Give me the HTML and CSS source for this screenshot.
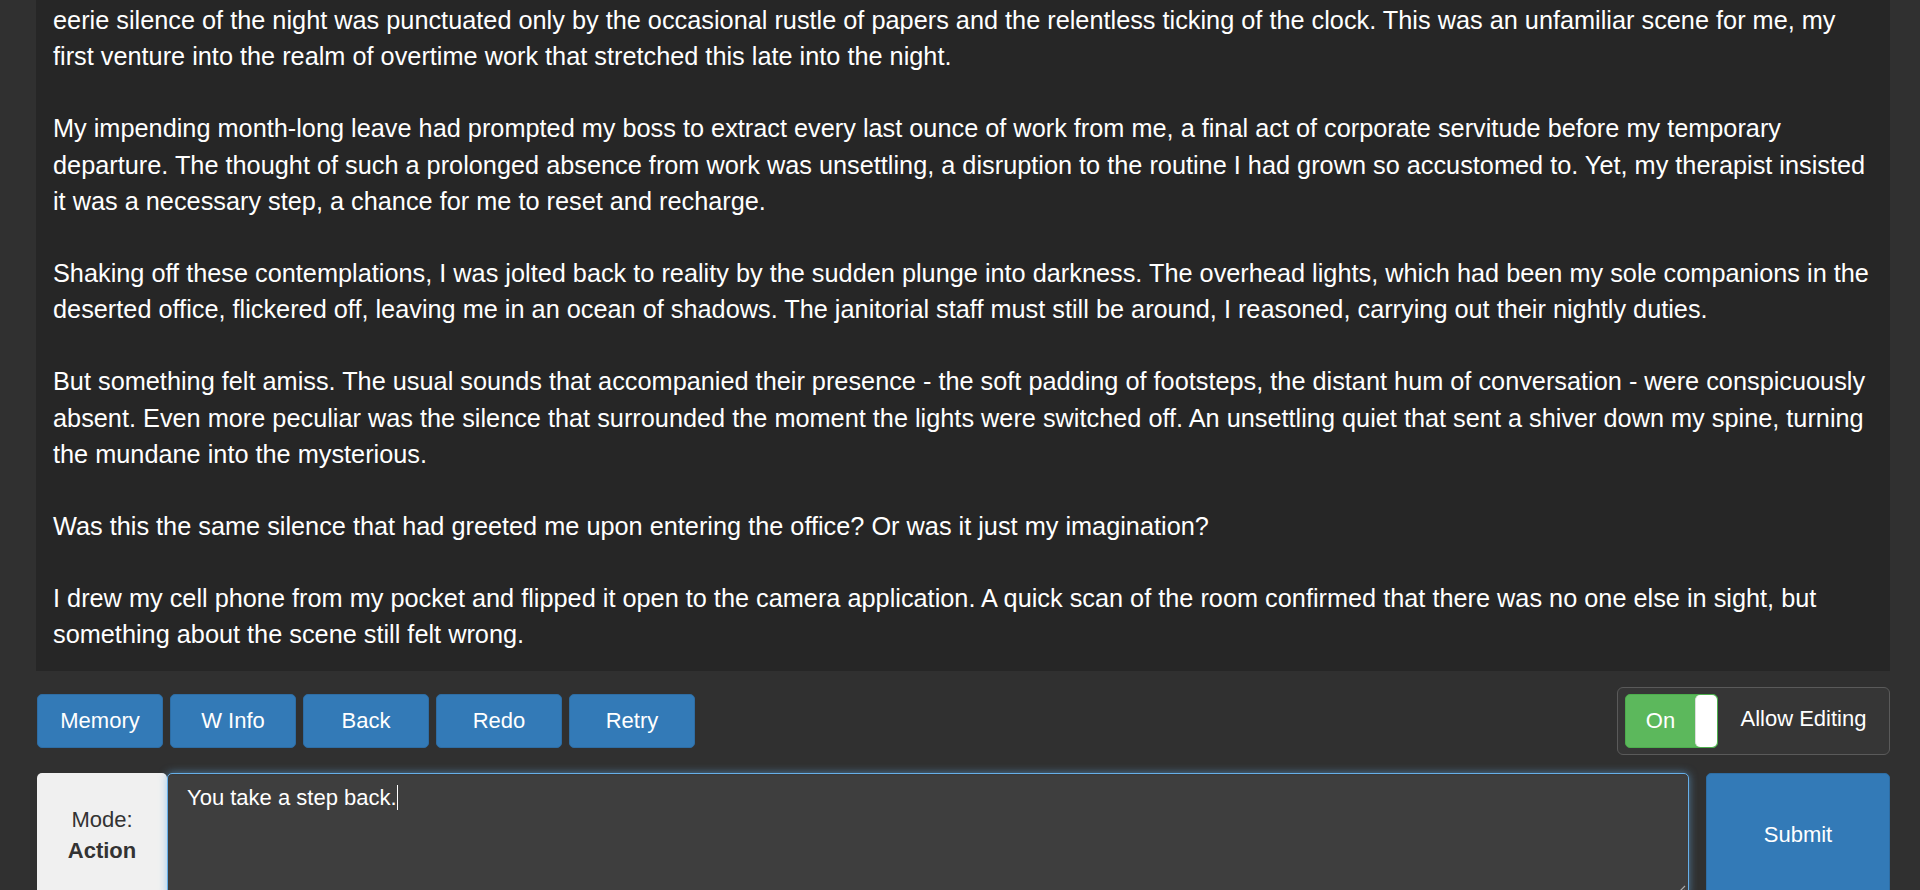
FILE: index.html
```html
<!DOCTYPE html>
<html lang="en">
<head>
<meta charset="utf-8">
<title>Story</title>
<link rel="stylesheet" href="styles.css">
</head>
<body>
<div class="app">
  <div class="story">
    <p>eerie silence of the night was punctuated only by the occasional rustle of papers and the relentless ticking of the clock. This was an unfamiliar scene for me, my first venture into the realm of overtime work that stretched this late into the night.</p>
    <p>My impending month-long leave had prompted my boss to extract every last ounce of work from me, a final act of corporate servitude before my temporary departure. The thought of such a prolonged absence from work was unsettling, a disruption to the routine I had grown so accustomed to. Yet, my therapist insisted it was a necessary step, a chance for me to reset and recharge.</p>
    <p>Shaking off these contemplations, I was jolted back to reality by the sudden plunge into darkness. The overhead lights, which had been my sole companions in the deserted office, flickered off, leaving me in an ocean of shadows. The janitorial staff must still be around, I reasoned, carrying out their nightly duties.</p>
    <p>But something felt amiss. The usual sounds that accompanied their presence - the soft padding of footsteps, the distant hum of conversation - were conspicuously absent. Even more peculiar was the silence that surrounded the moment the lights were switched off. An unsettling quiet that sent a shiver down my spine, turning the mundane into the mysterious.</p>
    <p>Was this the same silence that had greeted me upon entering the office? Or was it just my imagination?</p>
    <p>I drew my cell phone from my pocket and flipped it open to the camera application. A quick scan of the room confirmed that there was no one else in sight, but something about the scene still felt wrong.</p>
  </div>
  <div class="controls">
    <div class="actions">
      <button class="btn">Memory</button>
      <button class="btn">W Info</button>
      <button class="btn">Back</button>
      <button class="btn">Redo</button>
      <button class="btn">Retry</button>
    </div>
    <div class="toggle-box">
      <div class="toggle">
        <span class="toggle-on">On</span>
        <span class="toggle-handle"></span>
      </div>
      <span class="toggle-label">Allow Editing</span>
    </div>
  </div>
  <div class="input-row">
    <div class="mode">
      <span>Mode:</span>
      <span class="mode-name">Action</span>
    </div>
    <div class="input">You take a step back.<span class="caret"></span>
      <svg class="grip" width="10" height="10" viewBox="0 0 10 10"><path d="M9 2 L2 9 M9 6 L6 9" stroke="#aaa" stroke-width="1.2" fill="none"/></svg>
    </div>
    <button class="submit">Submit</button>
  </div>
</div>
</body>
</html>
```

FILE: styles.css
```css
html, body {
  margin: 0;
  height: 890px;
  overflow: hidden;
  background: #303030;
  color: #fff;
  font-family: "Liberation Sans", Arial, sans-serif;
}

.app {
  padding: 0 30px 0 36px;
}

.story {
  height: 671px;
  box-sizing: border-box;
  background: #262626;
  padding: 2px 16px 0 17px;
  font-size: 25.3px;
  line-height: 36.14px;
  overflow: hidden;
}

.story p {
  margin: 0 0 36.14px;
}

.controls {
  display: flex;
  justify-content: space-between;
  align-items: center;
  margin-top: 16px;
  height: 68px;
}

.actions {
  display: flex;
  gap: 7px;
  padding-left: 1px;
}

.btn {
  width: 126px;
  height: 54px;
  padding: 0;
  background: #337ab7;
  border: 1px solid #2e6da4;
  border-radius: 5px;
  color: #fff;
  font-family: "Liberation Sans", Arial, sans-serif;
  font-size: 22px;
}

.toggle-box {
  width: 273px;
  height: 68px;
  box-sizing: border-box;
  border: 1px solid #5a5a5a;
  border-radius: 6px;
  background: #363636;
  display: flex;
  align-items: center;
  padding-left: 7px;
}

.toggle {
  width: 93px;
  height: 54px;
  box-sizing: border-box;
  background: #5cb85c;
  border: 1px solid #4cae4c;
  border-radius: 5px;
  display: flex;
  align-items: stretch;
}

.toggle-on {
  flex: 1;
  text-align: center;
  line-height: 52px;
  font-size: 22px;
  color: #fff;
}

.toggle-handle {
  width: 21px;
  background: #fff;
  border-radius: 5px;
  border-left: 1px solid #ddd;
}

.toggle-label {
  flex: 1;
  text-align: center;
  font-size: 22px;
  padding-bottom: 4px;
}

.input-row {
  display: flex;
  margin-top: 18px;
  height: 124px;
  padding-left: 1px;
}

.mode {
  width: 130px;
  background: #f0f0f0;
  color: #333;
  border-radius: 5px 5px 0 0;
  display: flex;
  flex-direction: column;
  justify-content: center;
  align-items: center;
  font-size: 22px;
  line-height: 31.43px;
}

.mode-name {
  font-weight: bold;
}

.input {
  flex: 1;
  position: relative;
  background: #3e3e3e;
  border: 1px solid #66afe9;
  border-radius: 5px;
  box-shadow: inset 0 1px 1px rgba(0,0,0,.075), 0 0 8px rgba(102,175,233,.6);
  padding: 11px 19px 9px;
  font-size: 22px;
  line-height: 25px;
  color: #fff;
}

.caret {
  display: inline-block;
  width: 1px;
  height: 25px;
  background: #fff;
  vertical-align: -5px;
}

.grip {
  position: absolute;
  right: 2px;
  bottom: 2px;
}

.submit {
  width: 184px;
  margin-left: 17px;
  padding: 0;
  background: #337ab7;
  border: 1px solid #2e6da4;
  border-radius: 5px;
  color: #fff;
  font-family: "Liberation Sans", Arial, sans-serif;
  font-size: 22px;
}
```
